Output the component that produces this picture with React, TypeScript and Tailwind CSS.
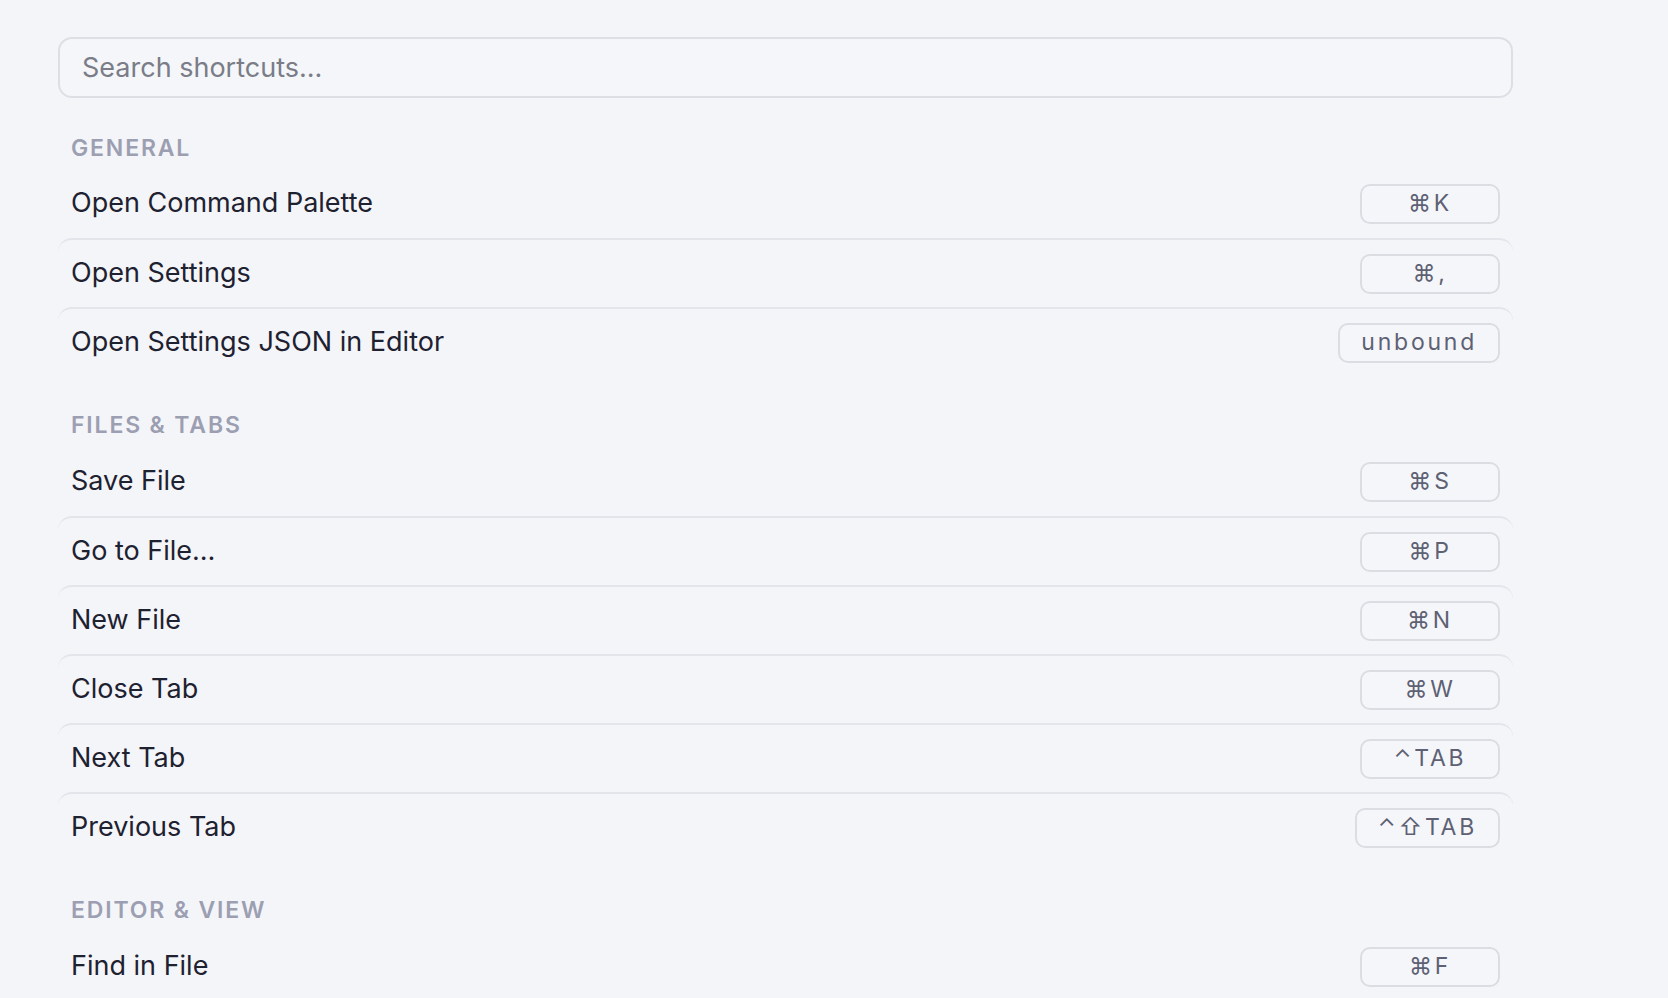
type Shortcut = { label: string; keys: string }

type Section = { title: string; items: Shortcut[] }

const sections: Section[] = [
  {
    title: 'General',
    items: [
      { label: 'Open Command Palette', keys: '⌘K' },
      { label: 'Open Settings', keys: '⌘,' },
      { label: 'Open Settings JSON in Editor', keys: 'unbound' },
    ],
  },
  {
    title: 'Files & Tabs',
    items: [
      { label: 'Save File', keys: '⌘S' },
      { label: 'Go to File…', keys: '⌘P' },
      { label: 'New File', keys: '⌘N' },
      { label: 'Close Tab', keys: '⌘W' },
      { label: 'Next Tab', keys: '⌃TAB' },
      { label: 'Previous Tab', keys: '⌃⇧TAB' },
    ],
  },
  {
    title: 'Editor & View',
    items: [{ label: 'Find in File', keys: '⌘F' }],
  },
]

function Kbd({ keys }: { keys: string }) {
  return (
    <kbd className="flex h-[40px] min-w-[140px] items-center justify-center rounded-[10px] border-2 border-[#dcdde3] bg-[#f5f6fa] px-[21px] font-['Inter',sans-serif] text-[23px] tracking-[0.12em] text-[#5d6173]">
      {keys}
    </kbd>
  )
}

function Row({ item, first }: { item: Shortcut; first: boolean }) {
  return (
    <div
      className={
        first
          ? 'flex h-[69px] items-center justify-between rounded-[14px] px-[13px]'
          : 'flex h-[69px] items-center justify-between rounded-[14px] border-t-2 border-[#e4e5ea] px-[13px]'
      }
    >
      <span className="text-[27px] text-[#1e2130]">{item.label}</span>
      <Kbd keys={item.keys} />
    </div>
  )
}

export default function App() {
  return (
    <div className="h-[998px] overflow-hidden bg-[#f4f5f9] font-['Inter',sans-serif]">
      <div className="w-[1513px] pt-[37px] pl-[58px]">
        <input
          type="text"
          placeholder="Search shortcuts..."
          className="h-[61px] w-full rounded-[14px] border-2 border-[#dedfe4] bg-[#f5f6fa] px-[22px] text-[27px] text-[#1e2130] outline-none placeholder:text-[#7a7d87]"
        />
        {sections.map((section, s) => (
          <section key={section.title} className={s === 0 ? 'mt-[35px]' : 'mt-[34px]'}>
            <h2
              className={
                s === 0
                  ? 'mb-[6px] h-[30px] px-[13px] text-[23px] leading-[30px] font-semibold tracking-[0.08em] text-[#9c9fb1] uppercase'
                  : 'mb-[7px] h-[30px] px-[13px] text-[23px] leading-[30px] font-semibold tracking-[0.08em] text-[#9c9fb1] uppercase'
              }
            >
              {section.title}
            </h2>
            {section.items.map((item, i) => (
              <Row key={item.label} item={item} first={i === 0} />
            ))}
          </section>
        ))}
      </div>
    </div>
  )
}
